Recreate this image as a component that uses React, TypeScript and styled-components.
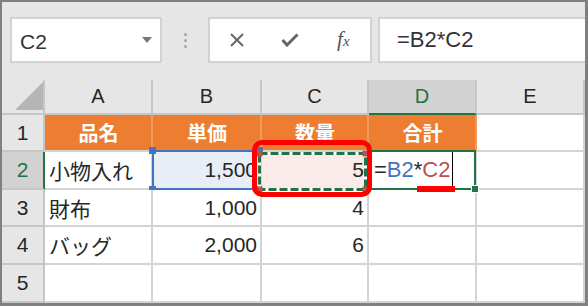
import React from "react"
import styled, { createGlobalStyle } from "styled-components"

const GlobalStyle = createGlobalStyle`
  html, body {
    margin: 0;
    padding: 0;
    background: #fff;
  }
  body {
    overflow: hidden;
  }
`

const BASE_FONT = `"Liberation Sans", "Noto Sans CJK JP", Arial, sans-serif`
const GRID = "#d4d4d4"
const HEAD_LINE = "#c6c6c6"
const GREEN = "#217346"
const BLUE = "#4472c4"
const REF_RED = "#c0504d"

const Frame = styled.div`
  box-sizing: border-box;
  width: 588px;
  height: 306px;
  border: 3px solid #808080;
  border-top-width: 2px;
  border-left-width: 2px;
  background: #e6e6e6;
  display: flex;
  flex-direction: column;
  font-family: ${BASE_FONT};
  color: #262626;
`

/* ---------- formula bar ---------- */

const FormulaBar = styled.div`
  box-sizing: border-box;
  height: 78px;
  padding: 15px 0 0 8px;
  display: flex;
  align-items: flex-start;
`

const Box = styled.div`
  box-sizing: border-box;
  height: 46px;
  background: #fff;
  border: 2px solid #d2d2d2;
  display: flex;
  align-items: center;
`

const NameBox = styled(Box)`
  width: 152px;
  justify-content: space-between;
  padding: 3px 8px 0 8px;
  font-size: 21px;
  color: #333;
`

const DropArrow = styled.span`
  width: 0;
  height: 0;
  margin-top: -4px;
  border-left: 5px solid transparent;
  border-right: 5px solid transparent;
  border-top: 6px solid #777;
`

const Grip = styled.div`
  width: 46px;
  height: 46px;
  display: flex;
  flex-direction: column;
  align-items: center;
  justify-content: center;
  gap: 3px;
`

const Dot = styled.span`
  width: 3px;
  height: 3px;
  border-radius: 50%;
  background: #a6a6a6;
`

const ButtonBox = styled(Box)`
  width: 164px;
`

const BarButton = styled.div`
  width: 54px;
  height: 100%;
  display: flex;
  align-items: center;
  justify-content: center;
  color: #666;
`

const Fx = styled.span`
  font-family: "Liberation Serif", "Times New Roman", serif;
  font-style: italic;
  font-size: 21px;
  color: #555;
  margin-top: -2px;
  & small {
    font-size: 15px;
  }
`

const FormulaInput = styled(Box)`
  flex: 1;
  margin-left: 6px;
  border-right: none;
  padding: 0 0 0 17px;
  font-size: 22px;
  color: #333;
`

/* ---------- sheet ---------- */

const Sheet = styled.div`
  flex: 1;
  display: grid;
  grid-template-columns: 43px 108px 109px 107px 108px 1fr;
  grid-template-rows: 35px 37px 38px 37px 38px 38px;
`

const Corner = styled.div`
  box-sizing: border-box;
  border-right: 2px solid ${HEAD_LINE};
  border-bottom: 2px solid ${HEAD_LINE};
  display: flex;
  align-items: flex-end;
  justify-content: flex-end;
  padding-bottom: 3px;
`

const CornerMark = styled.span`
  width: 28px;
  height: 28px;
  background: #b5b5b5;
  clip-path: polygon(100% 0, 100% 100%, 0 100%);
`

const ColHead = styled.div<{ $active?: boolean }>`
  box-sizing: border-box;
  display: flex;
  align-items: center;
  justify-content: center;
  font-size: 20px;
  background: ${(p) => (p.$active ? "#d2d2d2" : "#e6e6e6")};
  color: ${(p) => (p.$active ? GREEN : "#262626")};
  border-right: 2px solid ${HEAD_LINE};
  border-bottom: 2px solid ${(p) => (p.$active ? GREEN : HEAD_LINE)};
`

const RowHead = styled.div<{ $active?: boolean }>`
  box-sizing: border-box;
  display: flex;
  align-items: center;
  justify-content: center;
  font-size: 21px;
  background: ${(p) => (p.$active ? "#d2d2d2" : "#e6e6e6")};
  color: ${(p) => (p.$active ? GREEN : "#262626")};
  border-right: 2px solid ${(p) => (p.$active ? GREEN : HEAD_LINE)};
  border-bottom: 2px solid ${HEAD_LINE};
`

const Cell = styled.div<{ $align?: "left" | "right" | "center"; $bg?: string }>`
  position: relative;
  box-sizing: border-box;
  display: flex;
  align-items: center;
  justify-content: ${(p) =>
    p.$align === "right" ? "flex-end" : p.$align === "center" ? "center" : "flex-start"};
  padding: 0 3px 0 4px;
  background: ${(p) => p.$bg ?? "#fff"};
  border-right: 2px solid ${GRID};
  border-bottom: 2px solid ${GRID};
  font-size: 21px;
  white-space: nowrap;
`

const TitleCell = styled(Cell)`
  background: #ed7d31;
  border-right-color: #f09a5e;
  color: #fff;
  font-weight: bold;
  font-size: 20px;
  justify-content: center;
`

const FormulaCell = styled(Cell)`
  padding-left: 5px;
  font-size: 22px;
  overflow: visible;
`

const Ref = styled.span<{ $color: string }>`
  color: ${(p) => p.$color};
`

const Caret = styled.span`
  display: inline-block;
  width: 0;
  height: 37px;
  margin-left: 2px;
  border-left: 1.5px solid #000;
  vertical-align: middle;
`

/* range highlight around B2 (blue reference) */
const RefBox = styled.div`
  position: absolute;
  left: -1px;
  top: -2px;
  right: 0;
  bottom: -2px;
  border: 2px solid ${BLUE};
  pointer-events: none;
`

const Handle = styled.span<{ $v: "top" | "bottom"; $h: "left" | "right" }>`
  position: absolute;
  width: 7px;
  height: 7px;
  background: ${BLUE};
  ${(p) => p.$v}: -5px;
  ${(p) => p.$h}: -5px;
`

/* copy marquee around C2 */
const Marquee = styled.svg`
  position: absolute;
  left: -6px;
  top: -3px;
  width: 116px;
  height: 46px;
  pointer-events: none;
  z-index: 1;
`

/* red callout frame */
const Callout = styled.div`
  position: absolute;
  left: -10px;
  top: -12px;
  right: -5px;
  bottom: -9px;
  border: 5px solid #f00;
  border-radius: 10px;
  z-index: 5;
  pointer-events: none;
`

const Underline = styled.span`
  position: absolute;
  left: 48px;
  bottom: -4px;
  width: 38px;
  height: 6px;
  background: #f00;
  z-index: 5;
`

/* active cell outline on D2 */
const ActiveBox = styled.div`
  position: absolute;
  left: 0;
  top: -2px;
  right: -1px;
  bottom: -2px;
  border: 2px solid ${GREEN};
  pointer-events: none;
  z-index: 2;
`

const FillHandle = styled.span`
  position: absolute;
  right: -5px;
  bottom: -5px;
  width: 6px;
  height: 6px;
  background: ${GREEN};
  border: 1px solid #fff;
`

const CloseIcon = () => (
  <svg width="16" height="16" viewBox="0 0 16 16">
    <path d="M2 2 L14 14 M14 2 L2 14" stroke="#666" strokeWidth="2" fill="none" />
  </svg>
)

const CheckIcon = () => (
  <svg width="18" height="14" viewBox="0 0 18 14">
    <path d="M1.5 7 L6 12 L16.5 1.5" stroke="#666" strokeWidth="3" fill="none" />
  </svg>
)

const cols = ["A", "B", "C", "D", "E"]
const titles = ["品名", "単価", "数量", "合計"]
const items = [
  ["財布", "1,000", "4"],
  ["バッグ", "2,000", "6"],
]

export default function App() {
  const ants = { x: 3.5, y: 4.5, w: 106, h: 36 }
  const corners = [
    [ants.x, ants.y],
    [ants.x + ants.w, ants.y],
    [ants.x, ants.y + ants.h],
    [ants.x + ants.w, ants.y + ants.h],
  ]

  return (
    <>
      <GlobalStyle />
      <Frame>
        <FormulaBar>
          <NameBox>
            <span>C2</span>
            <DropArrow />
          </NameBox>
          <Grip>
            <Dot />
            <Dot />
            <Dot />
          </Grip>
          <ButtonBox>
            <BarButton>
              <CloseIcon />
            </BarButton>
            <BarButton>
              <CheckIcon />
            </BarButton>
            <BarButton>
              <Fx>
                f<small>x</small>
              </Fx>
            </BarButton>
          </ButtonBox>
          <FormulaInput>=B2*C2</FormulaInput>
        </FormulaBar>

        <Sheet>
          <Corner>
            <CornerMark />
          </Corner>
          {cols.map((c) => (
            <ColHead key={c} $active={c === "D"}>
              {c}
            </ColHead>
          ))}

          <RowHead>1</RowHead>
          {titles.map((t) => (
            <TitleCell key={t}>{t}</TitleCell>
          ))}
          <Cell />

          <RowHead $active>2</RowHead>
          <Cell>小物入れ</Cell>
          <Cell $align="right" $bg="#e8eef8">
            1,500
            <RefBox>
              <Handle $v="top" $h="left" />
              <Handle $v="top" $h="right" />
              <Handle $v="bottom" $h="left" />
              <Handle $v="bottom" $h="right" />
            </RefBox>
          </Cell>
          <Cell $align="right" $bg="#fbeaea">
            5
            <Marquee viewBox="0 0 116 46">
              <rect x={ants.x} y={ants.y} width={ants.w} height={ants.h} fill="none" stroke="#fff" strokeWidth="3" />
              <rect
                x={ants.x}
                y={ants.y}
                width={ants.w}
                height={ants.h}
                fill="none"
                stroke={GREEN}
                strokeWidth="3"
                strokeDasharray="8 3"
              />
              {corners.map(([cx, cy], i) => (
                <rect key={i} x={cx - 3} y={cy - 3} width="6" height="6" fill={REF_RED} />
              ))}
            </Marquee>
            <Callout />
          </Cell>
          <FormulaCell>
            =<Ref $color={BLUE}>B2</Ref>*<Ref $color={REF_RED}>C2</Ref>
            <Caret />
            <ActiveBox>
              <FillHandle />
            </ActiveBox>
            <Underline />
          </FormulaCell>
          <Cell />

          {items.map((row, i) => (
            <React.Fragment key={row[0]}>
              <RowHead>{i + 3}</RowHead>
              <Cell>{row[0]}</Cell>
              <Cell $align="right">{row[1]}</Cell>
              <Cell $align="right">{row[2]}</Cell>
              <Cell />
              <Cell />
            </React.Fragment>
          ))}

          <RowHead>5</RowHead>
          <Cell />
          <Cell />
          <Cell />
          <Cell />
          <Cell />
        </Sheet>
      </Frame>
    </>
  )
}
